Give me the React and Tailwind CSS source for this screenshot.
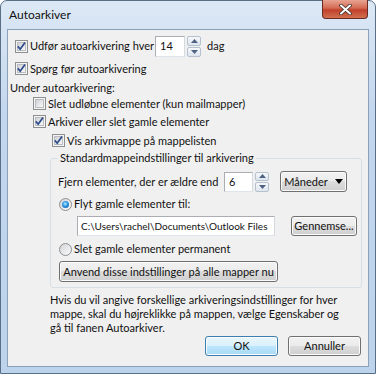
import React from 'react';

// Win7-style checkbox
function CheckBox({ checked }) {
  return (
    <span className="flex h-[13px] w-[13px] shrink-0 items-center justify-center border border-[#8e8f8f] bg-[#f4f4f4]">
      <span className="flex h-[9px] w-[9px] items-center justify-center border border-[#b9bcc1] bg-[linear-gradient(135deg,#cfd2d6,#f8f8f8)]">
        {checked && (
          <svg width="9" height="9" viewBox="0 0 9 9" className="overflow-visible">
            <path d="M0.8 4.4 L3.2 7.2 L8 0.6" fill="none" stroke="#2c4a8a" strokeWidth="1.7" />
          </svg>
        )}
      </span>
    </span>
  );
}

function Radio({ checked }) {
  return (
    <span className="flex h-[13px] w-[13px] shrink-0 items-center justify-center rounded-full border border-[#8e8f8f] bg-[linear-gradient(135deg,#d2d4d8,#fbfbfb)]">
      {checked && (
        <span className="h-[7px] w-[7px] rounded-full bg-[radial-gradient(circle_at_45%_40%,#b7ecff,#2d96e4_45%,#0c4a8c)]" />
      )}
    </span>
  );
}

function Spinner({ h }) {
  return (
    <div className={`ml-[2px] flex w-[14px] flex-col gap-px ${h}`}>
      <div className="flex flex-1 items-center justify-center rounded-[2px] border border-[#b6c1cf] bg-[linear-gradient(#f6f8fb,#dde5ee)]">
        <svg width="7" height="4" viewBox="0 0 7 4"><path d="M0 4 L3.5 0 L7 4 Z" fill="#4f6283" /></svg>
      </div>
      <div className="flex flex-1 items-center justify-center rounded-[2px] border border-[#b6c1cf] bg-[linear-gradient(#f6f8fb,#dde5ee)]">
        <svg width="7" height="4" viewBox="0 0 7 4"><path d="M0 0 L3.5 4 L7 0 Z" fill="#4f6283" /></svg>
      </div>
    </div>
  );
}

function Btn({ def, className, children }) {
  return (
    <div
      className={`flex items-center justify-center rounded-[3px] border shadow-[inset_0_0_0_1px_#fbfbfb] ${
        def
          ? 'border-[#3c7fb1] bg-[linear-gradient(#eaf6fd,#d9f0fc_50%,#bee6fd_50%,#a7d9f5)]'
          : 'border-[#707070] bg-[linear-gradient(#f2f2f2,#ebebeb_50%,#dddddd_50%,#cfcfcf)]'
      } ${className}`}
    >
      {children}
    </div>
  );
}

export default function App() {
  return (
    <div className="h-[374px] w-[376px] bg-white font-['Lato',sans-serif] text-[11px] leading-[16px] text-[#111]">
      <div className="flex h-full w-full flex-col rounded-t-[7px] border border-[#5a6f86] bg-[linear-gradient(#dce8f5,#c3d7ee_30%,#bcd3ec)] px-[6px] pb-[6px]">
        {/* title bar */}
        <div className="flex h-[28px] shrink-0 items-start justify-between">
          <span className="ml-[2px] mt-[6px] text-[12px]">Autoarkiver</span>
          <div className="-mt-px mr-px flex h-[19px] w-[46px] items-center justify-center rounded-b-[4px] border border-t-0 border-[#6b2a22] bg-[linear-gradient(#e8a493,#d46a52_45%,#c2412a_55%,#d0704f)]">
            <svg width="13" height="11" viewBox="0 0 13 11">
              <path d="M2 1.5 L11 9.5 M11 1.5 L2 9.5" stroke="#3b2d2d" strokeWidth="3.6" strokeLinecap="round" />
              <path d="M2 1.5 L11 9.5 M11 1.5 L2 9.5" stroke="#ffffff" strokeWidth="2" strokeLinecap="round" />
            </svg>
          </div>
        </div>

        {/* client area */}
        <div className="flex flex-1 flex-col border border-[#8ba0bb] bg-[#f0f0f0] pt-[5px]">
          <div className="ml-[7px] flex h-[22px] items-center">
            <CheckBox checked />
            <span className="ml-[2px] w-[125px] whitespace-nowrap">Udfør autoarkivering hver</span>
            <div className="flex h-[21px] w-[30px] items-center border border-[#abadb3] border-b-[#dfe3ea] border-r-[#d5d9e0] bg-white pl-[4px]">14</div>
            <Spinner h="h-[21px]" />
            <span className="ml-[6px]">dag</span>
          </div>
          <div className="ml-[7px] flex h-[23px] items-center">
            <CheckBox checked />
            <span className="ml-[2px] whitespace-nowrap">Spørg før autoarkivering</span>
          </div>
          <div className="ml-[2px] flex h-[15px] items-center">Under autoarkivering:</div>
          <div className="ml-[25px] flex h-[17px] items-center">
            <CheckBox />
            <span className="ml-[2px] whitespace-nowrap">Slet udløbne elementer (kun mailmapper)</span>
          </div>
          <div className="ml-[25px] flex h-[19px] items-center">
            <CheckBox checked />
            <span className="ml-[2px] whitespace-nowrap">Arkiver eller slet gamle elementer</span>
          </div>
          <div className="ml-[44px] flex h-[19px] items-center">
            <CheckBox checked />
            <span className="ml-[2px] whitespace-nowrap">Vis arkivmappe på mappelisten</span>
          </div>

          <fieldset className="ml-[42px] w-[312px] rounded-[3px] border border-[#d5dfe5] pb-[5px] pl-[7px]">
            <legend className="px-[2px] leading-[16px]">Standardmappeindstillinger til arkivering</legend>
            <div className="mt-[5px] flex h-[21px] items-center">
              <span className="w-[166px] whitespace-nowrap">Fjern elementer, der er ældre end</span>
              <div className="flex h-[20px] w-[29px] items-center border border-[#abadb3] border-b-[#dfe3ea] border-r-[#d5d9e0] bg-white pl-[4px]">6</div>
              <Spinner h="h-[20px]" />
              <Btn className="ml-[11px] h-[21px] w-[67px] gap-[7px]">
                <span>Måneder</span>
                <svg width="8" height="5" viewBox="0 0 8 5"><path d="M0 0 L8 0 L4 5 Z" fill="#000" /></svg>
              </Btn>
            </div>
            <div className="ml-px mt-[2px] flex h-[20px] items-center">
              <Radio checked />
              <span className="ml-[2px] whitespace-nowrap">Flyt gamle elementer til:</span>
            </div>
            <div className="ml-[19px] mt-[2px] flex h-[20px] items-center">
              <div className="flex h-[20px] w-[198px] items-center overflow-hidden whitespace-nowrap border border-[#abadb3] border-b-[#dfe3ea] border-r-[#d5d9e0] bg-white pl-[3px] text-[10px]">
                C:\Users\rachel\Documents\Outlook Files
              </div>
              <Btn className="ml-[16px] h-[20px] w-[66px]">Gennemse...</Btn>
            </div>
            <div className="ml-px mt-[3px] flex h-[20px] items-center">
              <Radio />
              <span className="ml-[2px] whitespace-nowrap">Slet gamle elementer permanent</span>
            </div>
            <Btn className="ml-px mt-[2px] h-[21px] w-[219px] whitespace-nowrap">Anvend disse indstillinger på alle mapper nu</Btn>
          </fieldset>

          <p className="ml-[42px] mt-[5px] whitespace-nowrap leading-[14px]">
            Hvis du vil angive forskellige arkiveringsindstillinger for hver
            <br />
            mappe, skal du højreklikke på mappen, vælge Egenskaber og
            <br />
            gå til fanen Autoarkiver.
          </p>

          <div className="mt-px flex justify-end gap-[10px] pr-[7px]">
            <Btn def className="h-[20px] w-[73px]">OK</Btn>
            <Btn className="h-[20px] w-[73px]">Annuller</Btn>
          </div>
        </div>
      </div>
    </div>
  );
}
